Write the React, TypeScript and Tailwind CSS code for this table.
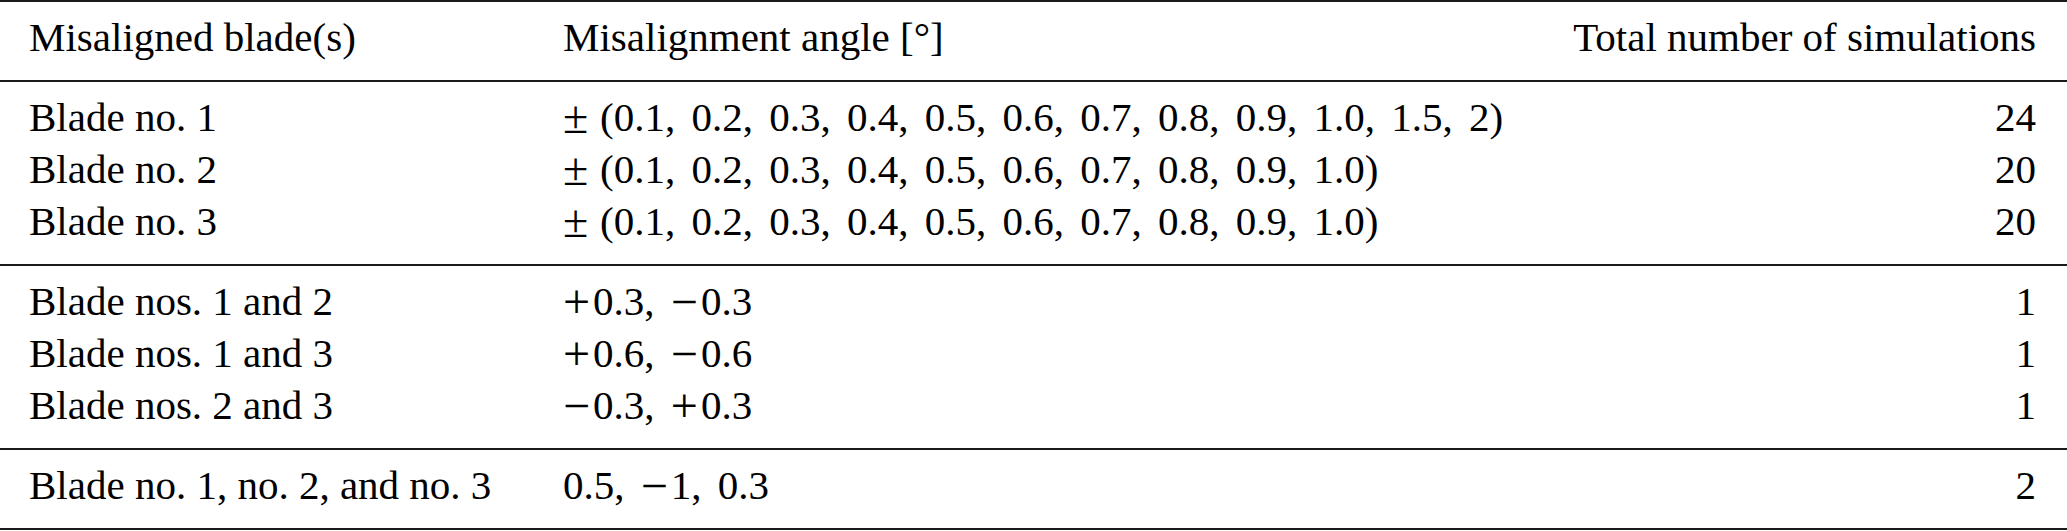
import React from "react";

type Row = {
  blades: string;
  sign?: string;
  angle: string;
  total: string;
};

const groups: Row[][] = [
  [
    {
      blades: "Blade no. 1",
      sign: "±",
      angle: "(0.1, 0.2, 0.3, 0.4, 0.5, 0.6, 0.7, 0.8, 0.9, 1.0, 1.5, 2)",
      total: "24",
    },
    {
      blades: "Blade no. 2",
      sign: "±",
      angle: "(0.1, 0.2, 0.3, 0.4, 0.5, 0.6, 0.7, 0.8, 0.9, 1.0)",
      total: "20",
    },
    {
      blades: "Blade no. 3",
      sign: "±",
      angle: "(0.1, 0.2, 0.3, 0.4, 0.5, 0.6, 0.7, 0.8, 0.9, 1.0)",
      total: "20",
    },
  ],
  [
    { blades: "Blade nos. 1 and 2", angle: "+0.3, −0.3", total: "1" },
    { blades: "Blade nos. 1 and 3", angle: "+0.6, −0.6", total: "1" },
    { blades: "Blade nos. 2 and 3", angle: "−0.3, +0.3", total: "1" },
  ],
  [{ blades: "Blade no. 1, no. 2, and no. 3", angle: "0.5, −1, 0.3", total: "2" }],
];

function Rule() {
  return <div className="h-[2px] bg-[#1a1a1a]" />;
}

// math-style signs are a little bigger than the text ones
function Angle({ text }: { text: string }) {
  return (
    <>
      {text.split(/([+−])/).map((part, i) =>
        part === "+" || part === "−" ? (
          <span key={i} className="mr-[3px] text-[48px] leading-[52px] [vertical-align:-3px]">
            {part}
          </span>
        ) : (
          <React.Fragment key={i}>{part}</React.Fragment>
        )
      )}
    </>
  );
}

export default function App() {
  return (
    <div className="w-[2067px] bg-white text-black font-['Liberation_Serif','Times_New_Roman',serif] text-[41px] leading-[52px]">
      <Rule />

      {/* Header */}
      <div className="grid grid-cols-[534px_1fr_auto] pl-[29px] pr-[31px] pt-[9px] pb-[17px]">
        <div>Misaligned blade(s)</div>
        <div>Misalignment angle [°]</div>
        <div className="text-right">Total number of simulations</div>
      </div>
      <Rule />

      {groups.map((group, gi) => (
        <React.Fragment key={gi}>
          <div className="pl-[29px] pr-[31px] pt-[9px] pb-[17px]">
            {group.map((row) => (
              <div key={row.blades} className="grid h-[52px] grid-cols-[534px_1fr_auto]">
                <div className="whitespace-nowrap">{row.blades}</div>
                <div className="whitespace-nowrap [word-spacing:6px]">
                  {row.sign && (
                    <span className="inline-block w-[37px] text-[46px] leading-[52px] [vertical-align:-2px]">
                      {row.sign}
                    </span>
                  )}
                  <Angle text={row.angle} />
                </div>
                <div className="text-right">{row.total}</div>
              </div>
            ))}
          </div>
          <Rule />
        </React.Fragment>
      ))}
    </div>
  );
}
